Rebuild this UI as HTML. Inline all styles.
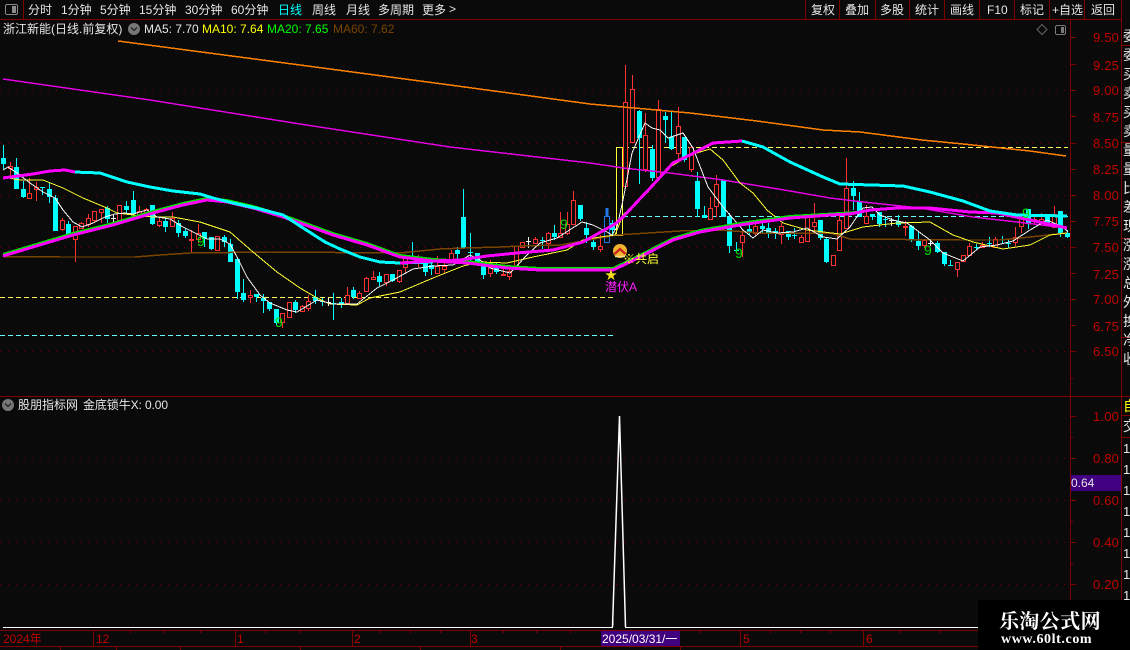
<!DOCTYPE html>
<html><head><meta charset="utf-8"><style>
html,body{margin:0;padding:0;background:#0a0a0a}
#p{position:relative;width:1130px;height:650px;overflow:hidden;background:#0a0a0a;font-family:"Liberation Sans","WenQuanYi Zen Hei","Noto Sans CJK SC",sans-serif;font-size:12px;color:#e6e6e6}
#p svg{position:absolute;left:0;top:0}
.t{position:absolute;white-space:nowrap;line-height:14px}
.a{position:absolute;left:1093px;font-size:13px;line-height:14px;color:#c00000;letter-spacing:.2px}
.b{position:absolute;left:1093px;font-size:13px;line-height:14px;color:#c00000;letter-spacing:.2px}
.g{position:absolute;color:#00e000;font-size:14px;line-height:14px}
.c{position:absolute;left:1123px;width:7px;overflow:hidden;font-size:14px;line-height:19px;color:#e6e6e6;white-space:pre}
</style></head><body><div id="p">
<svg width="1130" height="650" viewBox="0 0 1130 650" fill="none" shape-rendering="crispEdges">
<!-- grid -->
<g stroke="#6a0000" stroke-dasharray="1 7">
<path d="M0 90.500H1068M0 143.500H1068M0 195.500H1068M0 247.500H1068M0 299.500H1068M0 351.500H1068M0 458.500H1068M0 500.500H1068M0 542.500H1068M0 584.500H1068"/>
</g>
<!-- dashed levels -->
<g stroke-dasharray="5 3">
<path d="M0 297.500H615M616 147.500H1068" stroke="#ffff66"/>
<path d="M0 335.500H615M623 216.500H1068" stroke="#66ffff"/>
</g>
<!-- frame -->
<g stroke="#800000">
<path d="M0 19.500H1121M1070.500 19V630M1121.500 0V650M23.500 0V19M805.500 0V19M839.500 0V19M875.500 0V19M909.500 0V19M944.500 0V19M979.500 0V19M1014.500 0V19M1049.500 0V19M1084.500 0V19"/>
<path d="M0 396.500H1121M0 630.500H1121M0 646.500H1121M93.500 630V646M235.500 630V646M352.500 630V646M470.500 630V646M740.500 630V646M863.500 630V646" stroke-width="1"/>
<path d="M1070 37.500h6M1070 64.500h6M1070 90.500h6M1070 116.500h6M1070 143.500h6M1070 169.500h6M1070 195.500h6M1070 221.500h6M1070 247.500h6M1070 273.500h6M1070 299.500h6M1070 325.500h6M1070 351.500h6M1070 378.500h3M1070 416.500h6M1070 437.500h3M1070 458.500h6M1070 479.500h3M1070 500.500h6M1070 521.500h3M1070 542.500h6M1070 563.500h3M1070 584.500h6M1070 605.500h3"/>
<path d="M1122 45.500h8M1122 142.500h8M1122 238.500h8M1122 337.500h8M1122 396.500h8M1122 415.500h8M1122 437.500h8M130.500 630v3M164.500 630v3M200.500 630v3M265.500 630v3M300.500 630v3M380.500 630v3M410.500 630v3M440.500 630v3M503.500 630v3M536.500 630v3M570.500 630v3M700.500 630v3M770.500 630v3M800.500 630v3M830.500 630v3M900.500 630v3M940.500 630v3M60.500 646v4M116.500 646v4M180.500 646v4M300.500 646v4M420.500 646v4M560.500 646v4M680.500 646v4"/>
</g>
<!-- top-left + top-right window icons -->
<rect x="5.500" y="4.500" width="12" height="10" rx="1.500" stroke="#8a8a8a"/><rect x="12" y="6" width="4" height="7" fill="#8a8a8a"/>
<rect x="1055.500" y="25.500" width="10" height="9" rx="1.500" stroke="#7a7a7a"/><rect x="1061" y="27" width="3" height="6" fill="#7a7a7a"/>
<path d="M1042 24.500l5 5-5 5-5-5z" stroke="#666" shape-rendering="auto"/>
<!-- legend / panel circles -->
<g shape-rendering="auto">
<circle cx="134" cy="29" r="6" fill="#777"/><path d="M131 27.500l3 3 3-3" stroke="#222" stroke-width="1.300"/>
<circle cx="8" cy="405" r="6" fill="#777"/><path d="M5 403.500l3 3 3-3" stroke="#222" stroke-width="1.300"/>
</g>
<!-- cyan candles -->
<path stroke="#00ffff" d="M3.500 145V169M16.500 158V189M23.500 181V198M42.500 187V195M49.500 182V203M55.500 195V231M68.500 221V235M107.500 206V223M126.500 201V214M133.500 191V215M152.500 205V225M165.500 217V232M178.500 220V237M185.500 228V238M204.500 232V247M211.500 237V250M224.500 235V247M230.500 239V262M237.500 257V299M243.500 279V302M256.500 294V302M263.500 294V313M269.500 302V311M276.500 309V325M295.500 300V313M315.500 290V304M322.500 298V306M333.500 293V320M341.500 298V308M353.500 287V299M379.500 272V286M392.500 274V282M412.500 242V259M425.500 260V276M431.500 263V275M457.500 247V262M463.500 189V248M470.500 233V263M477.500 253V263M483.500 263V279M496.500 263V274M542.500 237V249M554.500 225V240M580.500 205V221M586.500 222V243M593.500 237V250M612.500 220V235M639.500 110V184M652.500 145V181M665.500 112V143M671.500 112V150M684.500 137V162M697.500 172V217M704.500 206V218M723.500 180V217M729.500 213V253M736.500 242V253M749.500 223V235M762.500 219V233M768.500 223V238M775.500 228V239M788.500 231V240M794.500 228V239M820.500 220V240M826.500 237V263M853.500 181V210M859.500 192V217M872.500 214V220M879.500 212V227M885.500 216V227M898.500 215V227M911.500 225V242M918.500 232V250M937.500 241V253M944.500 252V266M950.500 260V266M976.500 244V250M989.500 237V247M1002.500 236V243M1008.500 240V248M1028.500 209V229M1047.500 216V223M1060.500 211V237M1067.500 230V238"/>
<path stroke="#00ffff" stroke-width="5" d="M3.500 158V164M16.500 167V189M23.500 189V197M42.500 187V188M49.500 189V197M55.500 198V231M68.500 224V234M107.500 208V219M126.500 206V210M133.500 200V214M152.500 205V224M165.500 221V227M178.500 223V233M185.500 231V236M204.500 232V239M211.500 237V249M224.500 237V242M230.500 244V262M237.500 259V292M243.500 293V300M256.500 294V297M263.500 298V301M269.500 302V309M276.500 309V323M295.500 302V310M315.500 297V301M322.500 301V302M333.500 303V304M341.500 302V304M353.500 290V297M379.500 276V282M392.500 274V281M412.500 256V258M425.500 263V272M431.500 265V269M457.500 250V254M463.500 217V248M470.500 252V253M477.500 253V262M483.500 266V275M496.500 267V272M542.500 240V241M554.500 233V237M580.500 205V219M586.500 228V235M593.500 242V247M612.500 223V230M639.500 111V138M652.500 149V178M665.500 116V120M671.500 137V149M684.500 137V160M697.500 181V209M704.500 215V218M723.500 180V217M729.500 217V246M736.500 250V251M749.500 229V232M762.500 226V229M768.500 228V233M775.500 231V233M788.500 231V237M794.500 235V236M820.500 220V238M826.500 239V262M853.500 188V196M859.500 202V217M872.500 214V217M879.500 212V224M885.500 219V220M898.500 221V225M911.500 226V239M918.500 241V246M937.500 243V252M944.500 252V264M950.500 265V266M976.500 247V248M989.500 243V244M1002.500 239V240M1008.500 243V244M1028.500 209V223M1047.500 216V223M1060.500 211V233M1067.500 233V237"/>
<!-- red candles -->
<path stroke="#ff3232" d="M10.500 162V177M29.500 178V198M36.500 182V201M62.500 218V231M75.500 226V262M81.500 222V229M88.500 214V227M94.500 211V223M101.500 209V223M119.500 205V220M139.500 206V217M146.500 208V217M159.500 217V227M172.500 212V226M191.500 230V252M198.500 224V243M217.500 236V250M250.500 290V303M282.500 313V328M289.500 302V317M302.500 305V311M308.500 295V311M347.500 287V304M359.500 291V299M366.500 277V292M373.500 271V279M386.500 274V286M399.500 270V283M405.500 255V273M418.500 255V267M437.500 256V273M444.500 263V273M451.500 250V262M490.500 260V277M503.500 267V276M509.500 267V280M516.500 246V267M522.500 242V247M535.500 237V243M548.500 232V249M560.500 212V238M567.500 212V235M573.500 191V225M600.500 235V252M625.500 65V186M632.500 75V142M645.500 113V172M658.500 100V177M678.500 107V162M691.500 147V172M710.500 197V219M716.500 175V217M742.500 230V257M755.500 223V235M781.500 223V244M801.500 235V242M807.500 214V241M814.500 203V233M833.500 255V265M839.500 212V250M846.500 158V228M866.500 205V223M905.500 221V236M924.500 240V248M957.500 262V277M963.500 255V261M969.500 243V255M982.500 242V248M995.500 237V247M1015.500 227V246M1021.500 214V233M1034.500 215V225M1041.500 213V225M1054.500 206V227"/>
<path stroke="#ff3232" fill="#0a0a0a" d="M8.500 166.500h4v2h-4zM27.500 193.500h4v5h-4zM34.500 187.500h4v2h-4zM60.500 220.500h4v9h-4zM73.500 226.500h4v13h-4zM79.500 223.500h4v5h-4zM86.500 218.500h4v6h-4zM92.500 211.500h4v9h-4zM99.500 209.500h4v3h-4zM117.500 205.500h4v15h-4zM137.500 211.500h4v4h-4zM144.500 209.500h4v3h-4zM157.500 221.500h4v4h-4zM170.500 218.500h4v8h-4zM189.500 239.500h4v1h-4zM196.500 233.500h4v6h-4zM215.500 236.500h4v14h-4zM248.500 295.500h4v2h-4zM280.500 313.500h4v9h-4zM287.500 302.500h4v15h-4zM300.500 306.500h4v5h-4zM306.500 301.500h4v7h-4zM345.500 295.500h4v8h-4zM357.500 293.500h4v5h-4zM364.500 278.500h4v13h-4zM371.500 277.500h4v2h-4zM384.500 274.500h4v8h-4zM397.500 270.500h4v11h-4zM403.500 258.500h4v9h-4zM416.500 259.500h4v3h-4zM435.500 266.500h4v7h-4zM442.500 266.500h4v3h-4zM449.500 253.500h4v9h-4zM488.500 267.500h4v6h-4zM501.500 274.500h4v1h-4zM507.500 271.500h4v5h-4zM514.500 246.500h4v21h-4zM520.500 242.500h4v5h-4zM533.500 239.500h4v4h-4zM546.500 233.500h4v10h-4zM558.500 233.500h4v4h-4zM565.500 224.500h4v9h-4zM571.500 200.500h4v24h-4zM598.500 246.500h4v3h-4zM623.500 102.500h4v84h-4zM630.500 89.500h4v53h-4zM643.500 135.500h4v34h-4zM656.500 109.500h4v68h-4zM676.500 126.500h4v27h-4zM689.500 147.500h4v22h-4zM708.500 208.500h4v11h-4zM714.500 184.500h4v22h-4zM740.500 235.500h4v7h-4zM753.500 226.500h4v7h-4zM779.500 226.500h4v8h-4zM799.500 237.500h4v5h-4zM805.500 217.500h4v24h-4zM812.500 222.500h4v4h-4zM831.500 255.500h4v10h-4zM837.500 220.500h4v30h-4zM844.500 188.500h4v40h-4zM864.500 216.500h4v7h-4zM903.500 226.500h4v1h-4zM922.500 240.500h4v5h-4zM955.500 262.500h4v7h-4zM961.500 255.500h4v6h-4zM967.500 246.500h4v9h-4zM980.500 245.500h4v2h-4zM993.500 239.500h4v8h-4zM1013.500 237.500h4v5h-4zM1019.500 215.500h4v11h-4zM1032.500 219.500h4v2h-4zM1039.500 219.500h4v4h-4zM1052.500 214.500h4v13h-4z"/>
<!-- blue candle, white dojis, yellow candle -->
<path d="M604.500 216.500h5v26h-5z" stroke="#1e78e6" stroke-width="1.200"/><path d="M607 208V216" stroke="#1e78e6" stroke-width="3"/>
<path d="M113.500 215V222M111 218.500h5M328.500 298V306M326 302.500h5M528.500 237V248M526 241.500h5M891.500 218V226M889 220.500h5M930.500 240V246M928 243.500h5" stroke="#f0f0f0"/>
<rect x="616.500" y="147.500" width="6" height="88" stroke="#ffff33" stroke-width="1.200" fill="#0a0a0a"/>
<path d="M616 147.500h6" stroke="#ffff33"/>
<!-- long MAs -->
<polyline stroke="#ff8000" stroke-width="1.500" points="118,41 300,65 450,85 590,104 623,107 690,113 757,121 823,130 860,132 922,140 963,144 1030,151 1066,156"/>
<polyline stroke="#e000e0" stroke-width="1.500" points="3,79 150,100 300,124 450,147 590,163 617,167 623,168 670,173 723,180 790,191 830,198 863,202 920,208 973,217 1017,222 1066,228"/>
<polyline stroke="#7a4400" stroke-width="1.500" points="3,256.500 60,257 135,257 160,255 190,253 270,252 400,253 410,252 440,249 465,248 500,247 520,246 560,245 600,238 616,235 680,231 720,230 760,233 830,233 850,239 960,240 1000,240 1030,237 1066,233"/>
<!-- thin MAs -->
<polyline stroke="#ffff33" stroke-width="1" points="3,177 20,180 43,180 63,188 83,198 107,208 117,213 133,215 153,217 173,217 200,222 230,232 253,252 277,272 300,288 317,298 330,304 357,305 370,298 400,292 433,278 463,266 480,262 507,263 533,257 567,250 583,240 600,237 615,235 623,215 647,193 670,167 690,155 710,149 723,160 740,183 753,193 767,210 783,223 807,230 840,234 863,227 897,223 930,222 953,235 973,242 1003,249 1030,245 1050,235 1067,233"/>
<polyline stroke="#f5f5f5" stroke-width="1" points="3,170 8,167 17,173 30,183 43,192 55,198 63,210 73,222 82,227 93,223 105,217 115,214 125,213 133,214 147,210 157,217 170,219 183,227 197,234 207,239 220,239 230,244 237,257 247,277 260,295 270,303 287,310 297,312 317,300 333,304 357,304 377,288 393,280 413,269 433,266 453,265 470,255 480,260 490,268 510,273 527,255 540,243 557,238 582,222 593,225 607,232 612,235 617,227 623,200 632,153 645,123 652,128 660,130 668,138 683,133 693,148 708,187 723,207 743,230 753,238 763,230 777,233 793,232 807,228 823,237 837,239 850,227 863,208 872,207 880,215 893,220 907,223 930,240 943,253 963,261 980,247 997,245 1013,241 1030,230 1047,220 1063,227 1068,232"/>
<!-- thick MAs -->
<polyline stroke="#00e000" stroke-width="2" transform="translate(0,-2)" points="3,256 33,247 73,235 113,225 153,213 183,205 207,200 227,202 253,208 283,217 300,223 333,235 367,245 400,257 433,261 467,263 507,268 540,270 583,270 613,270 630,262 673,240 700,232 740,225 790,218 857,214 870,212"/>
<polyline stroke="#ff00ff" stroke-width="3" points="3,256 33,247 73,235 113,225 153,213 183,205 207,200 227,202 253,208 283,217 300,223 333,235 367,245 400,257 433,261 467,263 507,268 540,270 583,270 613,270 630,262 673,240 700,232 740,225 790,218 830,215 850,214 870,210 897,208 930,208 970,212 997,213 1030,220 1067,228"/>
<polyline stroke="#00ffff" stroke-width="3" points="74,172 100,173 127,182 150,187 173,191 200,194 213,198 233,203 260,209 283,215 300,226 325,242 340,249 360,257 380,262 400,263 433,262"/>
<polyline stroke="#ff00ff" stroke-width="3" points="3,178 33,174 50,171 65,170 75,172"/>
<polyline stroke="#ff00ff" stroke-width="3" points="400,263 433,261 460,260 487,256 517,253 553,250 583,242 615,224 623,217 637,202 653,185 673,163 690,155 713,143 742,141"/>
<polyline stroke="#00ffff" stroke-width="3" points="742,141 763,147 790,162 823,177 840,184 903,186 930,192 963,201 990,211 1017,215 1067,216"/>
<!-- signal icon -->
<g shape-rendering="auto">
<circle cx="620" cy="251" r="7" fill="#f2b430"/><path d="M614.500 254l5.500-5 5.500 5" stroke="#c81e1e" stroke-width="2.200"/><path d="M615 256.500h10" stroke="#f7dc8a" stroke-width="1.500"/>
<!-- indicator spike -->
<polyline shape-rendering="crispEdges" stroke="#fff" stroke-width="1.200" points="3,627.500 612.500,627.500 613,620"/>
<polyline stroke="#fff" stroke-width="1.500" points="612.500,627 619.500,416 625.500,627"/>
<polyline shape-rendering="crispEdges" stroke="#fff" stroke-width="1.200" points="625,627.500 978,627.500"/>
</g>
<!-- purple boxes -->
<rect x="1071" y="475" width="50" height="16" fill="#400080"/>
<rect x="601" y="631" width="79" height="15" fill="#400080"/>
</svg>

<div class="t" style="left:28px;top:3px">分时</div>
<div class="t" style="left:61px;top:3px">1分钟</div>
<div class="t" style="left:100px;top:3px">5分钟</div>
<div class="t" style="left:139px;top:3px">15分钟</div>
<div class="t" style="left:185px;top:3px">30分钟</div>
<div class="t" style="left:231px;top:3px">60分钟</div>
<div class="t" style="left:278px;top:3px;color:#00ffff">日线</div>
<div class="t" style="left:312px;top:3px">周线</div>
<div class="t" style="left:346px;top:3px">月线</div>
<div class="t" style="left:378px;top:3px">多周期</div>
<div class="t" style="left:422px;top:3px">更多</div>
<div class="t" style="left:449px;top:2px">&gt;</div>
<div class="t" style="left:811px;top:3px">复权</div>
<div class="t" style="left:845px;top:3px">叠加</div>
<div class="t" style="left:880px;top:3px">多股</div>
<div class="t" style="left:915px;top:3px">统计</div>
<div class="t" style="left:950px;top:3px">画线</div>
<div class="t" style="left:987px;top:3px">F10</div>
<div class="t" style="left:1020px;top:3px">标记</div>
<div class="t" style="left:1052px;top:3px">+自选</div>
<div class="t" style="left:1091px;top:3px">返回</div>

<div class="t" style="left:3px;top:22px">浙江新能(日线.前复权)</div>
<div class="t" style="left:144px;top:22px">MA5: 7.70</div>
<div class="t" style="left:202px;top:22px;color:#ffff00">MA10: 7.64</div>
<div class="t" style="left:267px;top:22px;color:#00ff00">MA20: 7.65</div>
<div class="t" style="left:333px;top:22px;color:#7a4400">MA60: 7.62</div>

<div class="a" style="top:31px">9.50</div><div class="a" style="top:59px">9.25</div><div class="a" style="top:84px">9.00</div><div class="a" style="top:111px">8.75</div><div class="a" style="top:137px">8.50</div><div class="a" style="top:163px">8.25</div><div class="a" style="top:189px">8.00</div><div class="a" style="top:215px">7.75</div><div class="a" style="top:241px">7.50</div><div class="a" style="top:268px">7.25</div><div class="a" style="top:293px">7.00</div><div class="a" style="top:320px">6.75</div><div class="a" style="top:345px">6.50</div>

<div class="g" style="left:197px;top:234px">9</div><div class="g" style="left:275px;top:315px">9</div><div class="g" style="left:560px;top:217px">9</div><div class="g" style="left:735px;top:246px">9</div><div class="g" style="left:924px;top:243px">9</div><div class="g" style="left:1022px;top:206px">9</div>

<div class="t" style="left:605px;top:268px;color:#ffe020;font-size:12px">★</div>
<div class="t" style="left:605px;top:280px;color:#ff20ff">潜伏A</div>
<div class="t" style="left:623px;top:252px;color:#ffff33">※共启</div>

<div class="t" style="left:18px;top:398px">股朋指标网</div>
<div class="t" style="left:83px;top:398px;letter-spacing:-.1px">金底锁牛X: 0.00</div>
<div class="b" style="top:410px">1.00</div><div class="b" style="top:452px">0.80</div><div class="b" style="top:494px">0.60</div><div class="b" style="top:536px">0.40</div><div class="b" style="top:578px">0.20</div>
<div class="t" style="left:1071px;top:476px;font-size:12px">0.64</div>

<div class="t" style="left:3px;top:632px;color:#c00000">2024年</div>
<div class="t" style="left:96px;top:632px;color:#c00000">12</div>
<div class="t" style="left:237px;top:632px;color:#c00000">1</div>
<div class="t" style="left:354px;top:632px;color:#c00000">2</div>
<div class="t" style="left:471px;top:632px;color:#c00000">3</div>
<div class="t" style="left:743px;top:632px;color:#c00000">5</div>
<div class="t" style="left:866px;top:632px;color:#c00000">6</div>
<div class="t" style="left:602px;top:632px;color:#fff">2025/03/31/一</div>

<div class="c" style="top:27px">委
委
买
卖
买
卖
量
量
比
差
现
涨
涨
总
外
换
净
收</div>
<div class="c" style="top:397px;color:#ffff00">自</div>
<div class="c" style="top:417px">交</div>
<div class="c" style="top:438px;line-height:21px;font-size:13px">1
1
1
1
1
1
1
1</div>

<div style="position:absolute;left:978px;top:600px;width:152px;height:50px;background:#000"></div>
<div class="t" style="left:999px;top:609px;font:bold 20px/22px 'Noto Serif CJK SC','Liberation Serif',serif;color:#fff;letter-spacing:.4px">乐淘公式网</div>
<div class="t" style="left:1001px;top:632px;font:bold 14px/16px 'Liberation Serif',serif;color:#fff;letter-spacing:.6px">www.60lt.com</div>
</div></body></html>
